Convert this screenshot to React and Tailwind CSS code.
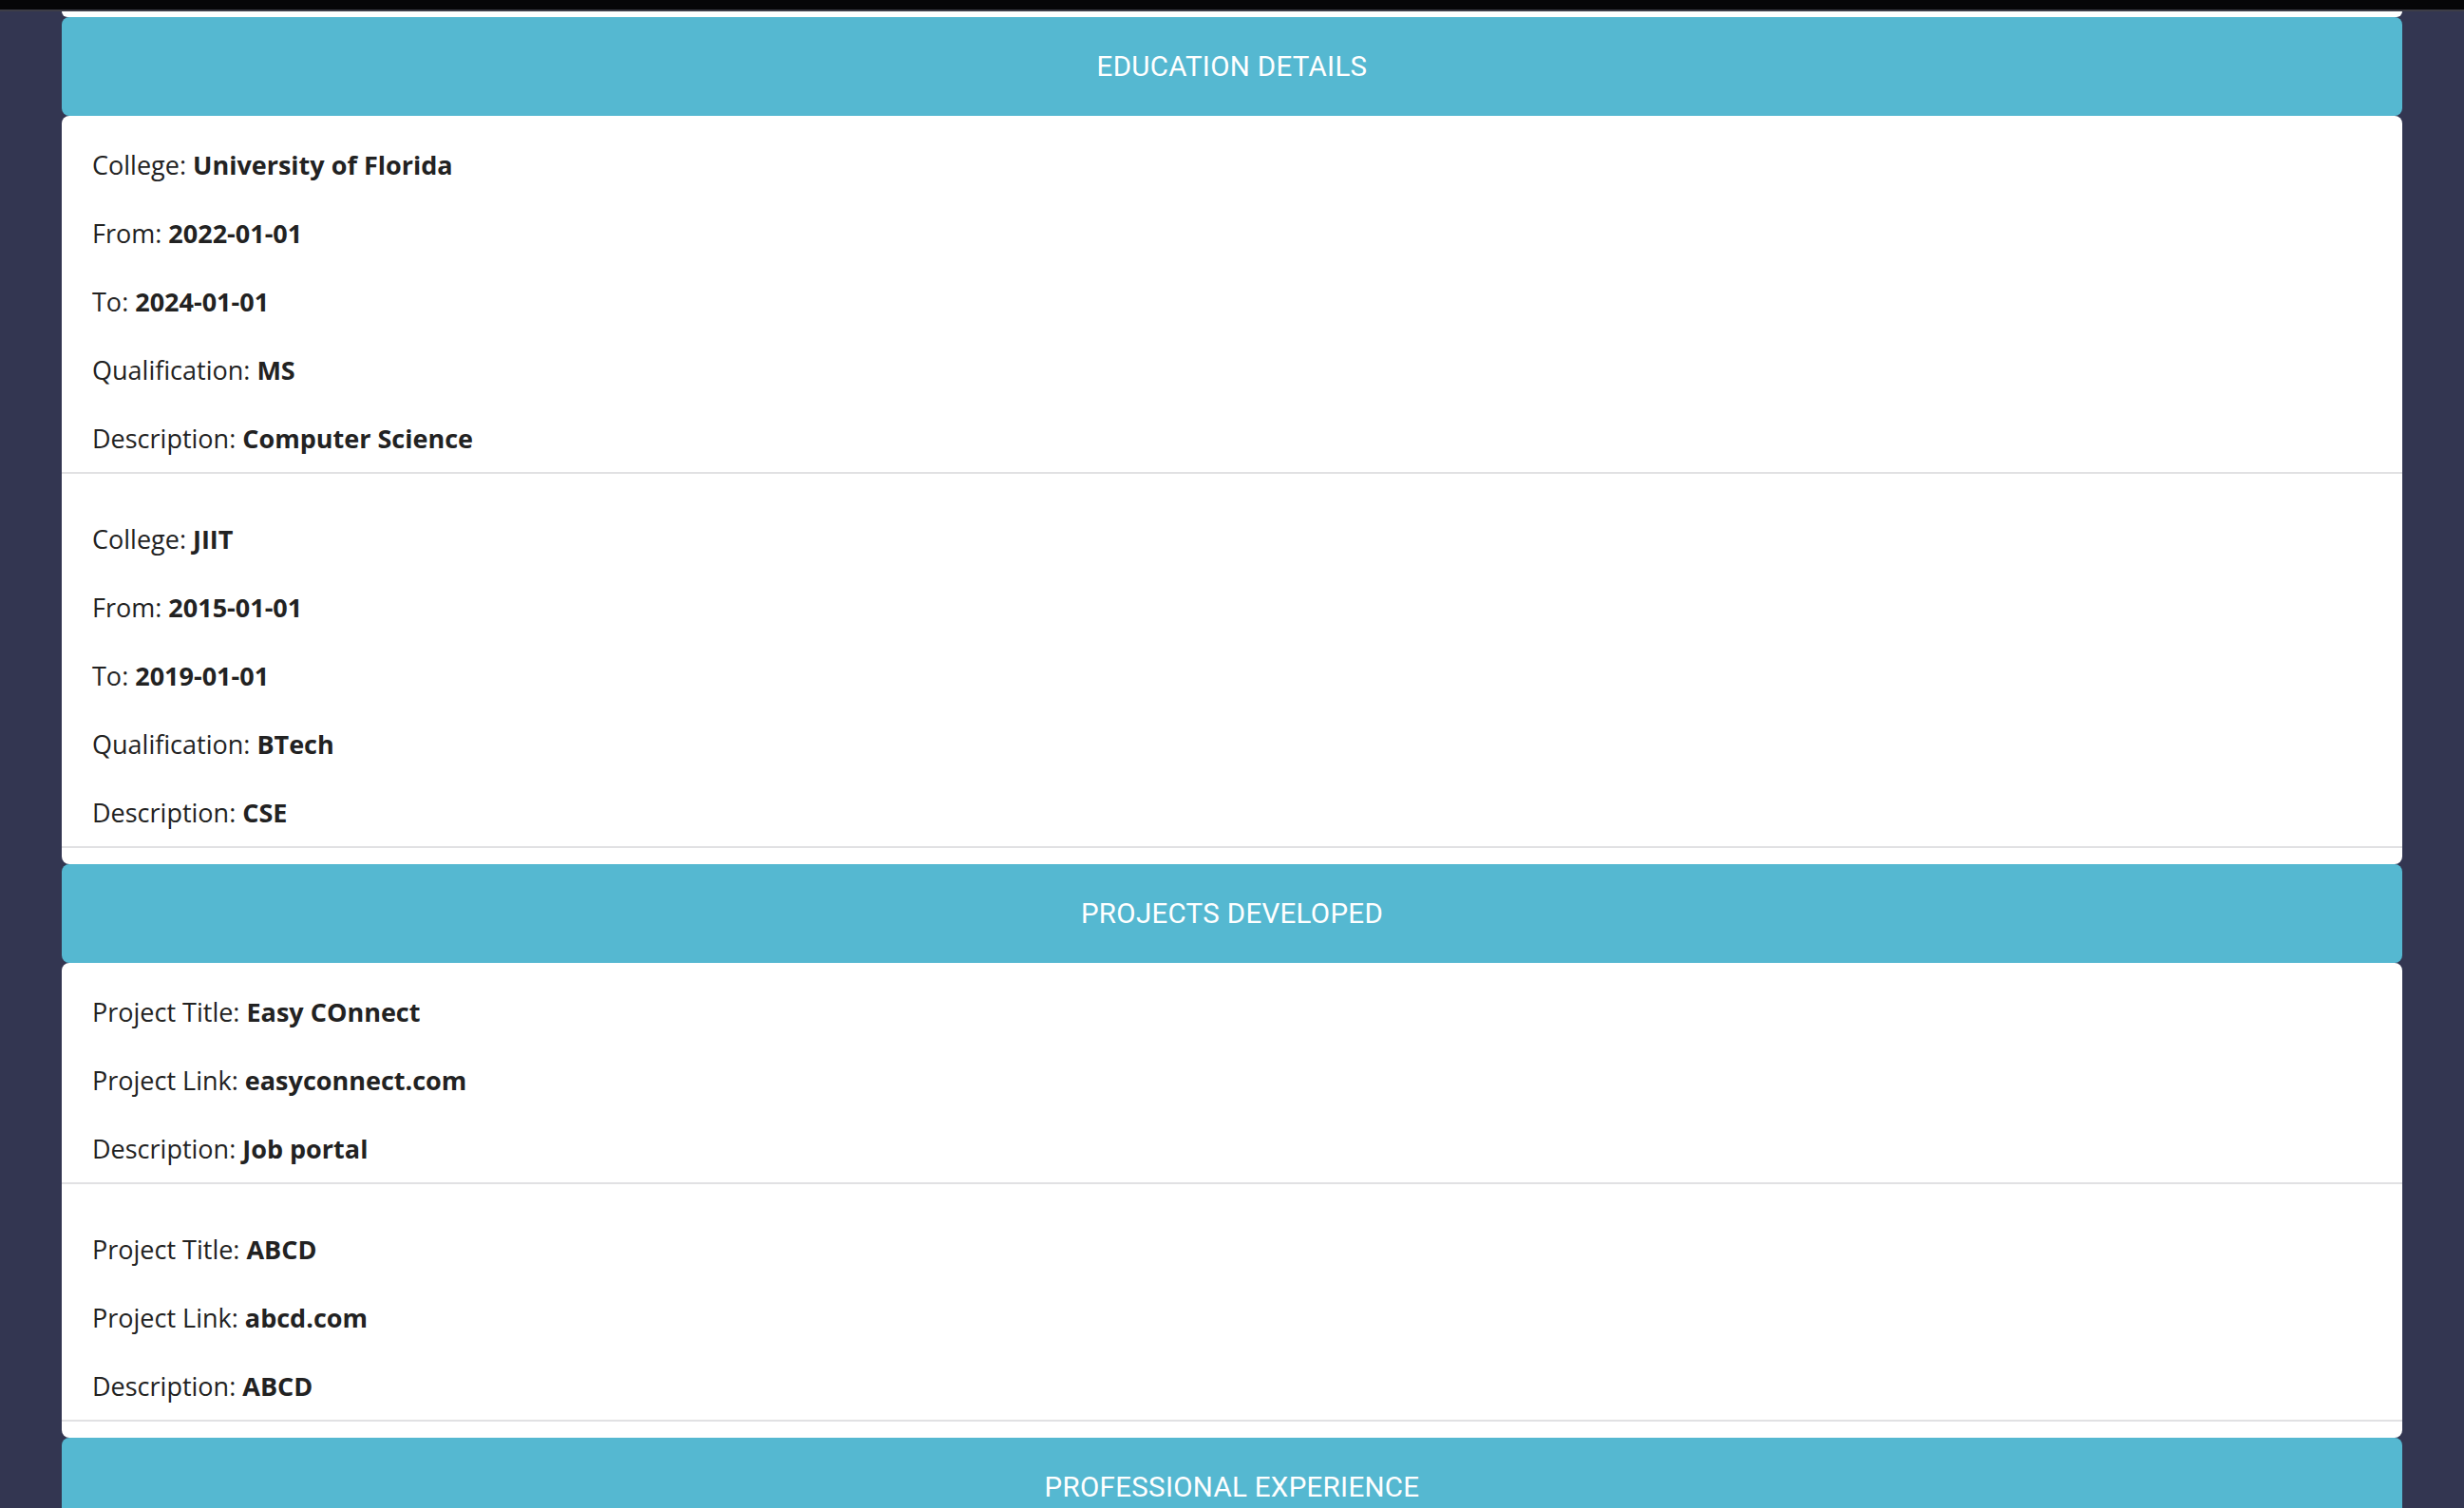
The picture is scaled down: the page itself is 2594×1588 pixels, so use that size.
const education = [
  [
    ['College', 'University of Florida'],
    ['From', '2022-01-01'],
    ['To', '2024-01-01'],
    ['Qualification', 'MS'],
    ['Description', 'Computer Science'],
  ],
  [
    ['College', 'JIIT'],
    ['From', '2015-01-01'],
    ['To', '2019-01-01'],
    ['Qualification', 'BTech'],
    ['Description', 'CSE'],
  ],
];

const projects = [
  [
    ['Project Title', 'Easy COnnect'],
    ['Project Link', 'easyconnect.com'],
    ['Description', 'Job portal'],
  ],
  [
    ['Project Title', 'ABCD'],
    ['Project Link', 'abcd.com'],
    ['Description', 'ABCD'],
  ],
];

function SectionHeader({ title }) {
  return (
    <div className="flex h-[104px] items-center justify-center rounded-lg bg-[#55b8d1] font-['Roboto',sans-serif] text-[29.5px] tracking-[0.3px] text-white">
      {title}
    </div>
  );
}

function Entry({ rows, first }) {
  return (
    <div className={`border-b-2 border-[#e1e1e3] pl-[32px] pb-[14px] ${first ? 'pt-[31px]' : 'pt-[48px]'}`}>
      {rows.map(([label, value], i) => (
        <p
          key={label}
          className={`leading-[42px] ${i === rows.length - 1 ? 'mb-0' : 'mb-[30px]'}`}
        >
          {label}: <span className="font-bold">{value}</span>
        </p>
      ))}
    </div>
  );
}

function Section({ title, entries }) {
  return (
    <section>
      <SectionHeader title={title} />
      <div className="rounded-lg bg-white pb-[17px] font-['Open_Sans',sans-serif] text-[27px] text-[#222222]">
        {entries.map((rows, i) => (
          <Entry key={i} rows={rows} first={i === 0} />
        ))}
      </div>
    </section>
  );
}

export default function App() {
  return (
    <div className="h-[1588px] overflow-hidden bg-[#333651]">
      <div className="h-[10px] bg-[#060608]" />
      <div className="h-[2px] bg-[#3d3d47]" />
      <div className="mx-auto w-[2464px]">
        <div className="h-[6px] rounded-b-lg bg-white" />
        <Section title="EDUCATION DETAILS" entries={education} />
        <Section title="PROJECTS DEVELOPED" entries={projects} />
        <SectionHeader title="PROFESSIONAL EXPERIENCE" />
      </div>
    </div>
  );
}
